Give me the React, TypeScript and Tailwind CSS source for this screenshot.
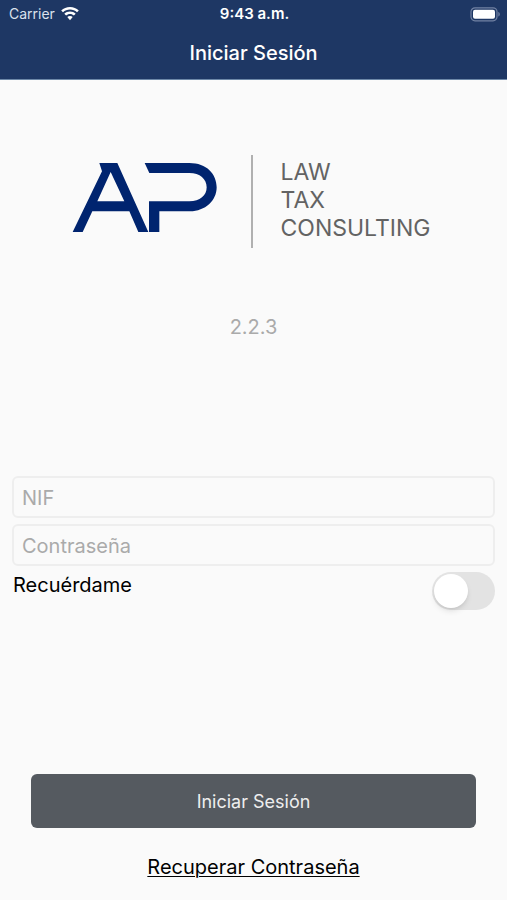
import { useState } from 'react';

const WifiIcon = () => (
  <svg viewBox="0 0 18 14" className="h-[14px] w-[18px]" fill="currentColor" aria-hidden="true">
    <path d="M9 0C5.600 0 2.500 1.300.2 3.400L2 5.300C3.800 3.600 6.300 2.600 9 2.600s5.200 1 7 2.700l1.800-1.900C15.500 1.300 12.400 0 9 0Z" />
    <path d="M9 4.500c-2.200 0-4.200.9-5.700 2.200l1.800 1.900C6.100 7.700 7.500 7.100 9 7.100s2.900.6 3.900 1.500l1.800-1.900C13.200 5.400 11.200 4.500 9 4.500Z" />
    <path d="M9 9c-1.100 0-2 .4-2.700 1L9 13.200 11.700 10C11 9.400 10.100 9 9 9Z" />
  </svg>
);

const BatteryIcon = () => (
  <svg viewBox="0 0 30 15" className="h-[15px] w-[30px]" aria-hidden="true">
    <rect x="1" y="0.800" width="26" height="13" rx="4" fill="none" stroke="#7282a3" strokeWidth="1.200" />
    <rect x="3" y="2.800" width="22" height="9" rx="2" fill="#fff" />
    <path d="M28.300 5v4.600c.9-.3 1.500-1.200 1.500-2.300S29.200 5.300 28.300 5Z" fill="#7282a3" />
  </svg>
);

const LogoMark = () => (
  <svg viewBox="36 54 438 213" className="h-[71px] w-[146px]" fill="#00246f" role="img" aria-label="AP">
    <path
      fillRule="evenodd"
      d="M38 264 126 82 118 57H172L265 264H235L208 202H97L68 264ZM112 172H193L152 84Z"
    />
    <path d="M254 57H388C440 57 470 90 470 130S436 202 390 202H298V264H267V172H388C420 172 440 155 440 130S420 87 388 87H268Z" />
  </svg>
);

const inputStyles =
  'h-[42px] w-full rounded-md border-2 border-[#eeeeee] bg-transparent px-2 pt-0.5 text-xl text-black outline-none placeholder:text-[#aaaaaa] placeholder:opacity-100';

const App = () => {
  const [nif, setNif] = useState('');
  const [password, setPassword] = useState('');
  const [remember, setRemember] = useState(false);

  return (
    <div className="flex min-h-screen flex-col bg-[#fafafa] font-['Inter',sans-serif] text-black">
      <header className="border-b border-[#6d88a8] bg-[#1e3764] text-white">
        {/* Status bar */}
        <div className="grid h-7 grid-cols-3 items-center pr-[7px] pl-[9px]">
          <div className="flex items-center gap-1.5 text-sm text-[#dbe1ec]">
            <span>Carrier</span>
            <span className="text-white"><WifiIcon /></span>
          </div>
          <span className="text-center text-[15px] font-semibold">9:43 a.m.</span>
          <div className="flex justify-end"><BatteryIcon /></div>
        </div>
        <h1 className="h-[51px] text-center text-xl leading-[50px] font-medium">Iniciar Sesión</h1>
      </header>

      <main className="flex flex-1 flex-col px-3">
        {/* Logo */}
        <div className="mt-[75px] flex h-[93px] justify-center">
          <div className="mt-[7px]"><LogoMark /></div>
          <div className="mr-7 ml-[33px] w-0.5 bg-[#b0b0b0]"></div>
          <div className="mt-[3px] min-w-[155px] text-[23px] leading-7 text-[#636363]">
            <p>LAW</p>
            <p>TAX</p>
            <p>CONSULTING</p>
          </div>
        </div>
        <p className="mt-[65px] text-center text-xl leading-7 text-[#aaaaaa]">2.2.3</p>

        <form className="mt-[135px] flex flex-1 flex-col" onSubmit={(e) => e.preventDefault()}>
          <div className="flex flex-col gap-1.5">
            <input
              type="text"
              aria-label="NIF"
              placeholder="NIF"
              value={nif}
              onChange={(e) => setNif(e.target.value)}
              className={inputStyles}
            />
            <input
              type="password"
              aria-label="Contraseña"
              placeholder="Contraseña"
              value={password}
              onChange={(e) => setPassword(e.target.value)}
              className={inputStyles}
            />
          </div>

          <div className="mt-1.5 flex items-start justify-between">
            <label htmlFor="remember" className="pl-px text-xl leading-[26px]">Recuérdame</label>
            <input
              id="remember"
              type="checkbox"
              role="switch"
              checked={remember}
              onChange={(e) => setRemember(e.target.checked)}
              className="h-[38px] w-[63px] cursor-pointer appearance-none rounded-full bg-[#e3e3e3] p-0.5 before:block before:h-[34px] before:w-[34px] before:rounded-full before:bg-white before:shadow-md before:transition-transform checked:bg-[#34c759] checked:before:translate-x-[25px]"
            />
          </div>

          <button
            type="submit"
            className="mx-[19px] mt-auto h-[54px] cursor-pointer rounded-md bg-[#555a60] pt-0.5 text-lg text-[#eeeeee]"
          >
            Iniciar Sesión
          </button>
          <a
            href="#recuperar"
            className="mt-[25px] mb-[19px] self-center text-xl leading-7 underline decoration-1 underline-offset-2"
          >
            Recuperar Contraseña
          </a>
        </form>
      </main>
    </div>
  );
};

export default App;
